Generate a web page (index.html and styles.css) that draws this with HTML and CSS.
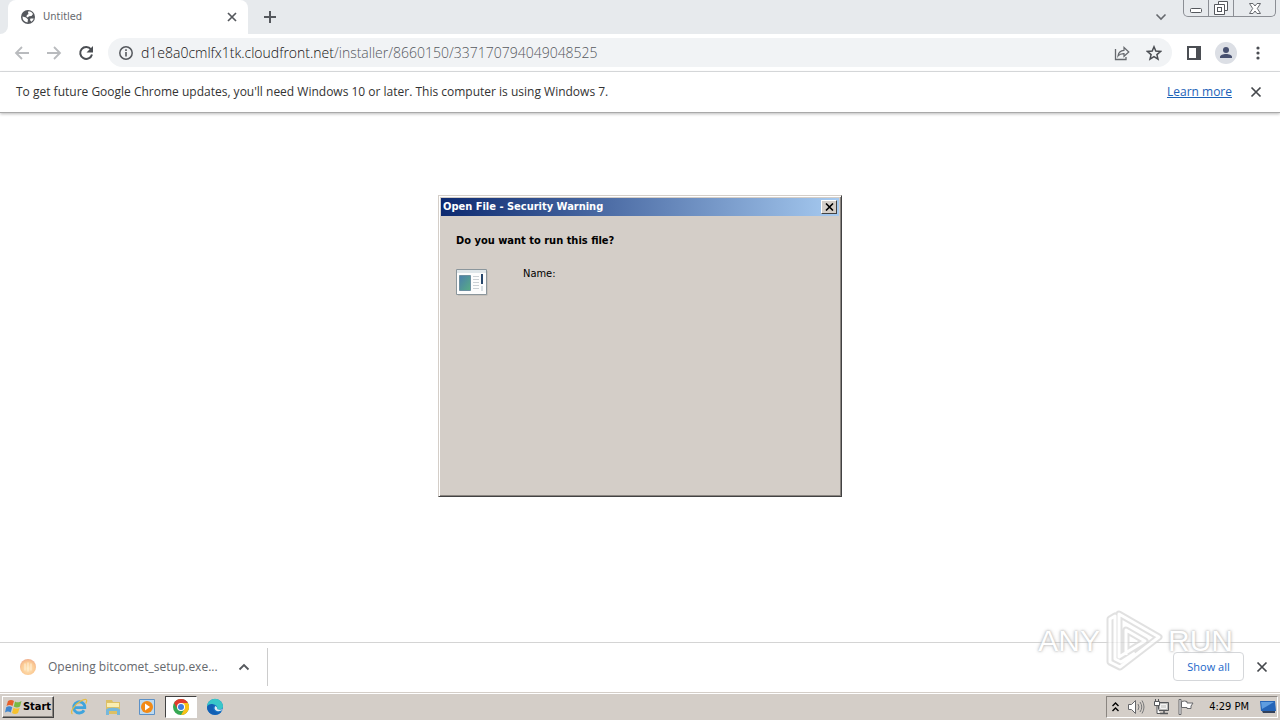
FILE: index.html
```html
<!DOCTYPE html>
<html lang="en">
<head>
<meta charset="utf-8">
<title>Untitled</title>
<link rel="stylesheet" href="styles.css">
</head>
<body>
<div class="desktop">
  <main class="browser">
    <header class="tabstrip">
      <div class="tab-edge"></div>
      <div class="tab">
        <svg class="globe" width="16" height="16" viewBox="0 0 16 16"><circle cx="8" cy="8" r="7" fill="#55585d"/><path d="M2.500 7.500l3.500 1 2 2-.5 3A6 6 0 0 1 2.500 7.500z" fill="#fff"/><path d="M8.500 2.200c2 0 3.800 1.200 4.500 2.800L11.500 7 9 7.200 7.800 8.500l-1.500-1L7 6l1.500-1-.5-1.500z" fill="#fff"/><path d="M10.500 9.500h3.200c-.3 1.300-1.200 2.500-2.400 3.200L10 11z" fill="#fff"/></svg>
        <span class="tab-title">Untitled</span>
        <button class="icon-btn" aria-label="Close tab"><svg width="10" height="10" viewBox="0 0 10 10"><path d="M1 1l8 8M9 1L1 9" stroke="#55585d" stroke-width="1.700"/></svg></button>
      </div>
      <button class="icon-btn new-tab" aria-label="New tab"><svg width="14" height="14" viewBox="0 0 14 14"><path d="M7 1v12M1 7h12" stroke="#55585d" stroke-width="2"/></svg></button>
      <button class="icon-btn tab-search" aria-label="Search tabs"><svg width="12" height="8" viewBox="0 0 12 8"><path d="M1.500 1.500L6 6l4.500-4.500" fill="none" stroke="#66696e" stroke-width="1.600"/></svg></button>
      <div class="window-controls">
        <button aria-label="Minimize"><svg class="low" width="12" height="5" viewBox="0 0 12 5"><rect x=".5" y=".5" width="11" height="4" rx="1" fill="#fff" stroke="#55585d"/></svg></button>
        <button aria-label="Restore"><svg width="14" height="14" viewBox="0 0 14 14"><path d="M4.500 3.500v-3h9v9h-3M.5 3.500h10v10H.5z" fill="#fff" stroke="#55585d"/><rect x="3.500" y="6.500" width="4" height="4" fill="#fff" stroke="#55585d"/></svg></button>
        <button class="wide" aria-label="Close"><svg width="12" height="11" viewBox="0 0 12 11"><path d="M.5.500h3.500l2 2.500 2-2.500h3.500L8.300 5.500l3.200 5H8L6 8l-2 2.500H.5l3.200-5z" fill="#fff" stroke="#66696e"/></svg></button>
      </div>
    </header>

    <nav class="toolbar">
      <button class="icon-btn" aria-label="Back"><svg width="16" height="16" viewBox="0 0 16 16"><path d="M15 8H2M8 2L2 8l6 6" fill="none" stroke="#b9bbbe" stroke-width="1.800"/></svg></button>
      <button class="icon-btn" aria-label="Forward"><svg width="16" height="16" viewBox="0 0 16 16"><path d="M1 8h13M8 2l6 6-6 6" fill="none" stroke="#b9bbbe" stroke-width="1.800"/></svg></button>
      <button class="icon-btn" aria-label="Reload"><svg width="16" height="16" viewBox="0 0 16 16"><path d="M13 4.300A6 6 0 1 0 14 9.500" fill="none" stroke="#4b4e53" stroke-width="2"/><path d="M15 1v6.500H8.500z" fill="#4b4e53"/></svg></button>
      <div class="address">
        <svg width="16" height="16" viewBox="0 0 16 16"><circle cx="8" cy="8" r="6.200" fill="none" stroke="#55585d" stroke-width="1.500"/><path d="M8 7v4.500M8 4.300v1.600" stroke="#55585d" stroke-width="1.600"/></svg>
        <p class="url"><span class="host">d1e8a0cmlfx1tk.cloudfront.net</span>/installer/8660150/337170794049048525</p>
        <button class="icon-btn" aria-label="Share"><svg width="16" height="16" viewBox="0 0 16 16"><path d="M1.500 4v10.500H12V12" fill="none" stroke="#66696e" stroke-width="1.300"/><path d="M4 11c.5-4 2.500-5.500 6-5.700V2.500L14.800 7 10 11.300V8.600C7.500 8.500 5.500 9 4 11z" fill="none" stroke="#66696e" stroke-width="1.200"/></svg></button>
        <button class="icon-btn" aria-label="Bookmark"><svg width="16" height="16" viewBox="0 0 16 16"><path d="M8 1.800l1.800 4.300 4.700.4-3.600 3.100 1.100 4.600L8 11.700l-4 2.500 1.100-4.600L1.500 6.500l4.700-.4z" fill="none" stroke="#4b4e53" stroke-width="1.500"/></svg></button>
      </div>
      <button class="icon-btn" aria-label="Side panel"><svg width="16" height="16" viewBox="0 0 16 16"><path d="M1 1h14v14H1z" fill="#4b4e53"/><path d="M3 3h7v10H3z" fill="#fff"/></svg></button>
      <button class="icon-btn profile" aria-label="Profile"><svg width="22" height="22" viewBox="0 0 22 22"><circle cx="11" cy="11" r="11" fill="#dcdfe5"/><circle cx="11" cy="8" r="3" fill="#485170"/><path d="M5 16v-1c0-2 3-3 6-3s6 1 6 3v1z" fill="#485170"/></svg></button>
      <button class="icon-btn" aria-label="Menu"><svg width="16" height="16" viewBox="0 0 16 16" fill="#4b4e53"><circle cx="8" cy="3" r="1.600"/><circle cx="8" cy="8" r="1.600"/><circle cx="8" cy="13" r="1.600"/></svg></button>
    </nav>

    <div class="infobar">
      <p>To get future Google Chrome updates, you'll need Windows 10 or later. This computer is using Windows 7.</p>
      <a href="#">Learn more</a>
      <button class="icon-btn" aria-label="Dismiss"><svg width="12" height="12" viewBox="0 0 12 12"><path d="M1.500 1.500l9 9M10.500 1.500l-9 9" stroke="#45484c" stroke-width="1.700"/></svg></button>
    </div>

    <section class="page"></section>

    <footer class="downloads">
      <div class="download">
        <svg width="16" height="16" viewBox="0 0 16 16"><defs><radialGradient id="ball" cx=".5" cy=".6" r=".6"><stop offset="0" stop-color="#ffe9bd"/><stop offset=".7" stop-color="#fbc993"/><stop offset="1" stop-color="#efae8c"/></radialGradient></defs><circle cx="8" cy="8" r="8" fill="url(#ball)"/><path d="M5 4.500v7M8 3.500v9M11 4.500v7" stroke="#fff0da"/></svg>
        <span class="file">Opening bitcomet_setup.exe...</span>
        <button class="icon-btn" aria-label="Download options"><svg width="12" height="8" viewBox="0 0 12 8"><path d="M1.500 6.500L6 2l4.500 4.500" fill="none" stroke="#55585d" stroke-width="1.800"/></svg></button>
      </div>
      <button class="show-all">Show all</button>
      <button class="icon-btn" aria-label="Close downloads"><svg width="12" height="12" viewBox="0 0 12 12"><path d="M1.500 1.500l9 9M10.500 1.500l-9 9" stroke="#45484c" stroke-width="1.700"/></svg></button>
    </footer>
  </main>

  <div class="dialog" role="dialog" aria-labelledby="dialog-title">
    <div class="titlebar">
      <h1 id="dialog-title">Open File - Security Warning</h1>
      <button aria-label="Close dialog"><svg width="9" height="8" viewBox="0 0 9 8"><path d="M1 .5l7 7M8 .5l-7 7" stroke="#000" stroke-width="1.600"/></svg></button>
    </div>
    <div class="dialog-body">
      <h2>Do you want to run this file?</h2>
      <div class="file-row">
        <svg width="32" height="28" viewBox="0 0 32 28"><defs><linearGradient id="app" x2="1" y2="1"><stop offset="0" stop-color="#4a7eac"/><stop offset="1" stop-color="#58ad84"/></linearGradient></defs><path d="M2 2h29.500v24.500H2z" fill="#b5b0aa"/><path d="M.5.500h30v25H.5z" fill="#fcfcfc" stroke="#8b969c"/><path d="M1 1h29v3H1z" fill="#dfe6e9"/><path d="M3.500 6.500h11v15h-11z" fill="url(#app)" stroke="#6c8fa0"/><path d="M17 7.500h6M17 10.500h6M17 13.500h6M17 16.500h6M17 19.500h6" stroke="#cbd0d4"/><path d="M26 5v10" stroke="#26466b" stroke-width="2"/><path d="M25 17h2v5h-2z" fill="#d5dde1"/></svg>
        <span>Name:</span>
      </div>
    </div>
  </div>
</div>

<div class="taskbar">
  <button class="start"><svg width="18" height="16" viewBox="0 0 18 16"><path d="M3 2c2-1.500 4-1.500 6 0L7.500 7c-2-1.300-4-1.300-6 0z" fill="#e6602a"/><path d="M10 2.500c2 1.200 4 1.200 6.500-.5L15 7.500c-2 1.300-4 1.300-6.200 0z" fill="#78b943"/><path d="M1.200 8.300c2-1.300 4-1.300 6 0L5.700 13.500c-2-1.300-3.500-1.300-5.700 0z" fill="#3f86cf"/><path d="M8.500 8.700c2 1.200 4 1.200 6.200 0L13 14c-2 1.300-4 1.300-6 0z" fill="#f6c12d"/></svg>Start</button>
  <div class="launchers">
    <button aria-label="Internet Explorer"><svg width="18" height="18" viewBox="0 0 18 18"><path d="M14 12.300A5.600 5.600 0 1 1 14.800 9.700H4.500" fill="none" stroke="#3fa4dd" stroke-width="2.800"/><path d="M2.500 16C-.5 14.500 4 7 10 3.500s8-2.500 5.800 2" fill="none" stroke="#e5bd45" stroke-width="1.300"/></svg></button>
    <button aria-label="Explorer"><svg width="18" height="18" viewBox="0 0 18 18"><path d="M2 2h6l1 2h7v12H2z" fill="#ddc064"/><path d="M3 5h12v4H3z" fill="#faedb0"/><path d="M2 17v-5c0-3 14-3 14 0v5h-3v-4H5v4z" fill="#76b8dc"/></svg></button>
    <button aria-label="Media Player"><svg width="18" height="18" viewBox="0 0 18 18"><path d="M1.500 1.500h15v15h-15z" fill="#bddaf0" stroke="#5c91c7"/><circle cx="9" cy="9" r="6" fill="#f28a16"/><path d="M7 5.500l5 3.500-5 3.500z" fill="#fff"/></svg></button>
    <button class="active" aria-label="Chrome"><svg width="16" height="16" viewBox="0 0 16 16"><circle cx="8" cy="8" r="8" fill="#36a853"/><path d="M1.070 4A8 8 0 0 1 14.930 4H8L4.540 10z" fill="#e33b2e"/><path d="M14.930 4A8 8 0 0 1 8 16l3.460-6L8 4z" fill="#fbc116"/><circle cx="8" cy="8" r="4" fill="#fff"/><circle cx="8" cy="8" r="3" fill="#3f7de0"/></svg></button>
    <button aria-label="Edge"><svg width="18" height="18" viewBox="0 0 18 18"><circle cx="9" cy="9" r="8" fill="#1672c5"/><path d="M1 9a8 8 0 0 1 16-.5c0 3-4 3.500-6 2.500 1-2-.5-4.500-4-4.500S1 9 1 9z" fill="#38c7c9"/><path d="M1 9c1-3.500 6-4 8-1.500C6.500 8 6 12 10 14c2 1 4 .5 5.500-.3C11 19 1 17 1 9z" fill="#1260b4"/><path d="M9.500 8c-2 2-.5 5 2.500 5.200 2 .1 3.200-.6 4-1.200l1-1.200c-1.500 1-4 1.200-6 .2.500-1 0-2.200-1.500-3z" fill="#e0edf4"/></svg></button>
  </div>
  <div class="tray">
    <svg width="7" height="10" viewBox="0 0 7 10"><path d="M.5 4l3-3 3 3M.5 9l3-3 3 3" fill="none" stroke="#000" stroke-width="1.400"/></svg>
    <svg width="18" height="16" viewBox="0 0 18 16"><path d="M1.500 5.500h3l4-4v13l-4-4h-3z" fill="#fff" stroke="#66676a"/><path d="M11 5q2 3 0 6M13 3q3.500 5 0 10M15 1.500q4 6.500 0 13" fill="none" stroke="#77787a"/></svg>
    <svg width="17" height="16" viewBox="0 0 17 16"><path d="M5.500 3.500h10v8h-10z" fill="#b9b9b7" stroke="#55575a"/><path d="M7.500 5.500h6v4h-6z" fill="#d8d8d6" stroke="#f4f4f4"/><path d="M7 14.500h8M11 12v3" stroke="#55575a" stroke-width="1.500"/><path d="M1.500 2.500h5v4h-5zM2.500 0v2M5.500 0v2M4 7v7.500h3" fill="#fff" stroke="#55575a"/></svg>
    <svg width="16" height="16" viewBox="0 0 16 16"><path d="M1 .5h2v15H1z" fill="#fff" stroke="#66676a"/><path d="M3.500 2.500q3-1 5.500 0v1.500h6l-2 3 0 2.500H9V8.500H3.500z" fill="#fff" stroke="#66676a"/></svg>
    <time>4:29 PM</time>
    <svg width="16" height="14" viewBox="0 0 16 14"><path d="M0 1h15l1 10H1z" fill="#2565b8"/><path d="M1 2h13L2 9z" fill="#5f9de0"/><path d="M2 11h13v2H3z" fill="#33415a"/></svg>
  </div>
</div>

<div class="watermark" aria-hidden="true">
  <span>ANY</span>
  <svg width="58" height="64" viewBox="0 0 58 64"><g fill="none" stroke-linejoin="round"><path d="M21 46V21L40 32 14 48V5L54 28 15 58 5 53V10l5-3v43l6 3 14-9" stroke="#d8d8d8" stroke-width="7"/><path d="M21 46V21L40 32 14 48V5L54 28 15 58 5 53V10l5-3v43l6 3 14-9" stroke="#fff" stroke-width="3"/></g></svg>
  <span>RUN</span>
</div>
</body>
</html>
```
FILE: styles.css
```css
* { box-sizing: border-box; }

body {
  margin: 0;
  height: 100vh;
  display: flex;
  flex-direction: column;
  overflow: hidden;
  position: relative;
  background: #fff;
  color: #333;
  font: 12px/16px "Open Sans", "DejaVu Sans", sans-serif;
}

p, h1, h2 { margin: 0; font-size: inherit; }
svg { display: block; flex: none; }
button { font: inherit; color: inherit; padding: 0; }

.icon-btn {
  display: flex;
  align-items: center;
  justify-content: center;
  background: none;
  border: 0;
}

.desktop { flex: 1; min-height: 0; position: relative; display: flex; }
.browser { flex: 1; min-width: 0; display: flex; flex-direction: column; }

.tabstrip { display: flex; height: 34px; background: #e7eaed; }
.tab-edge { width: 8px; background: #fff; }
.tab-edge::before {
  content: "";
  display: block;
  height: 100%;
  background: #e7eaed;
  border-bottom-right-radius: 8px;
}
.tab {
  width: 240px;
  padding: 0 11px 0 12px;
  display: flex;
  align-items: center;
  gap: 7px;
  background: #fff;
  border-radius: 8px 8px 0 0;
}
.tab-title {
  flex: 1;
  color: #66696e;
  font-family: "DejaVu Sans Condensed", "DejaVu Sans", sans-serif;
  font-size: 11px;
}
.new-tab { width: 44px; }
.tab-search { margin-left: auto; width: 44px; }
.window-controls {
  display: flex;
  height: 17px;
  margin-right: 4px;
  border: 1px solid #8b8e94;
  border-top: 0;
  border-radius: 0 0 5px 5px;
}
.window-controls button {
  width: 25px;
  display: flex;
  align-items: center;
  justify-content: center;
  background: none;
  border: 0;
  border-right: 1px solid #8b8e94;
}
.window-controls .wide { width: 41px; border-right: 0; }
.window-controls .low { margin-top: 4px; }

.toolbar {
  display: flex;
  align-items: center;
  gap: 16px;
  height: 38px;
  padding: 0 14px;
  border-bottom: 1px solid #d9dbde;
}
.address {
  flex: 1;
  display: flex;
  align-items: center;
  gap: 16px;
  height: 29px;
  margin-left: -2px;
  margin-right: -2px;
  padding: 0 10px;
  border-radius: 15px;
  background: #f1f3f5;
}
.url { flex: 1; margin-left: -9px; font-size: 14px; font-weight: 300; color: #55585d; }
.host { color: #111; }
.profile { margin: 0 -3px; }

.infobar {
  display: flex;
  align-items: center;
  height: 41px;
  padding: 0 18px 0 16px;
  border-bottom: 1px solid #a9a9a9;
  box-shadow: 0 1px 3px #bbb;
}
.infobar p { flex: 1; }
.infobar a { color: #1b62b8; margin-right: 18px; }

.page { flex: 1; }

.downloads {
  display: flex;
  align-items: center;
  height: 50px;
  padding: 0 12px 2px 0;
  border-top: 1px solid #d4d4d4;
}
.download {
  display: flex;
  align-items: center;
  width: 268px;
  height: 38px;
  padding: 0 17px 0 20px;
  border-right: 1px solid #ccc;
}
.file { flex: 1; margin-left: 12px; color: #66696e; }
.show-all {
  margin: 0 12px 0 auto;
  width: 71px;
  height: 29px;
  border: 1px solid #d5d7da;
  border-radius: 4px;
  background: #fff;
  color: #1967c9;
  font-size: 11px;
}

.dialog {
  position: absolute;
  top: 50%;
  left: 50%;
  transform: translate(-50%, -50%);
  width: 404px;
  height: 302px;
  padding: 1px;
  background: #d4cec8;
  border: 1px solid;
  border-color: #d4cec8 #424242 #424242 #d4cec8;
  box-shadow: inset 1px 1px #fff, inset -1px -1px #8a8580;
  color: #000;
  font-family: "DejaVu Sans Condensed", "DejaVu Sans", sans-serif;
  font-size: 11px;
}
.titlebar {
  display: flex;
  align-items: center;
  justify-content: space-between;
  height: 18px;
  margin: 1px;
  padding: 0 2px;
  background: linear-gradient(to right, #0d2a70, #a6caf0);
  color: #fff;
}
.titlebar button, .start {
  display: flex;
  align-items: center;
  justify-content: center;
  background: #d4cec8;
  border: 1px solid;
  border-color: #fff #424242 #424242 #fff;
}
.titlebar button { width: 16px; height: 14px; }
.dialog-body { padding: 16px; }
.file-row { display: flex; gap: 35px; margin-top: 17px; }
.file-row svg { margin-top: 3px; }

.taskbar {
  display: flex;
  align-items: center;
  height: 28px;
  padding: 0 2px;
  background: #d4cec8;
  border-top: 1px solid #d4cec8;
  box-shadow: inset 0 1px #fff;
  color: #000;
  font-family: "DejaVu Sans Condensed", "DejaVu Sans", sans-serif;
}
.start {
  width: 52px;
  height: 22px;
  font-size: 11px;
  font-weight: bold;
  box-shadow: inset -1px -1px #8a8580;
}
.launchers { display: flex; margin-left: 9px; gap: 2px; }
.launchers button {
  width: 32px;
  height: 22px;
  display: flex;
  align-items: center;
  justify-content: center;
  background: none;
  border: 0;
}
.launchers .active {
  background: #fff;
  border: 1px solid;
  border-color: #424242 #fff #fff #424242;
}
.tray {
  display: flex;
  align-items: center;
  gap: 8px;
  height: 22px;
  margin-left: auto;
  padding: 0 1px 0 5px;
  border: 1px solid;
  border-color: #8a8580 #fff #fff #8a8580;
  font-size: 11px;
}
.tray time { margin: 0 3px 0 7px; }

.watermark {
  position: absolute;
  right: 47px;
  bottom: 47px;
  display: flex;
  align-items: center;
  gap: 5px;
  opacity: 0.75;
  pointer-events: none;
  color: #fff;
  font: 30px/40px "Liberation Sans Narrow", "Liberation Sans", sans-serif;
  text-shadow: 0 0 2px #aaa, 0 0 3px #bbb, 0 0 4px #ccc;
}
```
